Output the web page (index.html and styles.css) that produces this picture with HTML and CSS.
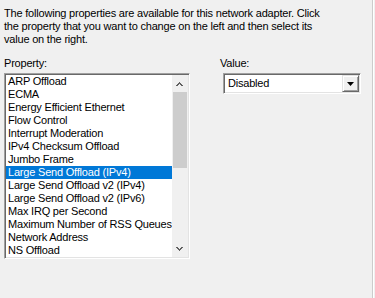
FILE: index.html
```html
<!DOCTYPE html>
<html lang="en">
<head>
    <meta charset="UTF-8" />
    <title>Advanced – Network Adapter Properties</title>
    <link rel="stylesheet" href="styles.css">
</head>
<body>
    <div class="tab-page">
        <p class="intro">The following properties are available for this network adapter. Click<br>the property that you want to change on the left and then select its<br>value on the right.</p>

        <div class="fields">
            <div class="col-property">
                <div class="field-label">Property:</div>
                <div class="listbox">
                    <ul class="list-items">
                        <li>ARP Offload</li>
                        <li>ECMA</li>
                        <li>Energy Efficient Ethernet</li>
                        <li>Flow Control</li>
                        <li>Interrupt Moderation</li>
                        <li>IPv4 Checksum Offload</li>
                        <li>Jumbo Frame</li>
                        <li class="selected">Large Send Offload (IPv4)</li>
                        <li>Large Send Offload v2 (IPv4)</li>
                        <li>Large Send Offload v2 (IPv6)</li>
                        <li>Max IRQ per Second</li>
                        <li>Maximum Number of RSS Queues</li>
                        <li>Network Address</li>
                        <li>NS Offload</li>
                    </ul>
                    <div class="scrollbar">
                        <div class="scroll-btn">
                            <svg width="7" height="4" viewBox="0 0 7 4"><path d="M3 0h1v1h1v1h1v1h1v1H5V3H4V2H3v1H2v1H0V3h1V2h1V1h1z" fill="#606060"/></svg>
                        </div>
                        <div class="scroll-track">
                            <div class="scroll-thumb"></div>
                        </div>
                        <div class="scroll-btn">
                            <svg width="7" height="4" viewBox="0 0 7 4"><path d="M0 0h2v1h1v1h1V1h1V0h2v1H6v1H5v1H4v1H3V3H2V2H1V1H0z" fill="#606060"/></svg>
                        </div>
                    </div>
                </div>
            </div>

            <div class="col-value">
                <div class="field-label">Value:</div>
                <div class="combobox">
                    <span class="combo-text">Disabled</span>
                    <span class="combo-btn">
                        <svg width="7" height="4" viewBox="0 0 7 4"><path d="M0 0h7L3.5 4z" fill="#000"/></svg>
                    </span>
                </div>
            </div>
        </div>
    </div>
</body>
</html>
```

FILE: styles.css
```css
body {
    margin: 0;
    padding: 0;
    background: #f0f0f0;
    font-family: 'Liberation Sans', Arial, sans-serif;
    font-size: 11px;
    line-height: 13px;
    letter-spacing: -0.2px; /* Dialog-Schrift ist etwas schmaler */
    color: #000;
    overflow: hidden;
}

/* Rahmen der Registerkarte rechts */
.tab-page {
    width: 373px;
    height: 298px;
    box-sizing: border-box;
    border-right: 1px solid #cccccc;
    box-shadow: 1px 0 0 #ffffff;
    padding: 7px 0 0 4px;
}

.intro {
    margin: 0;
}

.fields {
    display: flex;
    margin-top: 11px;
}

.col-property {
    width: 186px;
}

.col-value {
    margin-left: 30px;
    width: 141px;
}

.field-label {
    margin-bottom: 3px;
}

/* --- Listbox --- */

.listbox {
    display: flex;
    width: 186px;
    height: 186px;
    box-sizing: border-box;
    background: #fff;
    border: 1px solid;
    border-color: #a0a0a0 #ffffff #ffffff #a0a0a0;
    box-shadow: inset 1px 1px 0 #696969, inset -1px -1px 0 #e3e3e3;
    padding: 1px;
}

.list-items {
    list-style: none;
    margin: 0;
    padding: 0;
    flex: 1;
}

.list-items li {
    height: 13px;
    padding-left: 2px;
    white-space: nowrap;
}

.list-items li.selected {
    background: #0078d7;
    color: #fff;
}

.scrollbar {
    width: 17px;
    display: flex;
    flex-direction: column;
    background: #f0f0f0;
}

.scroll-btn {
    height: 17px;
    display: flex;
    align-items: center;
    justify-content: center;
}

.scroll-btn svg {
    display: block;
}

.scroll-track {
    flex: 1;
    padding: 0 1px;
}

.scroll-thumb {
    height: 76px;
    background: #cdcdcd;
}

/* --- Combobox --- */

.combobox {
    display: flex;
    margin-left: 3px;
    width: 138px;
    height: 21px;
    box-sizing: border-box;
    background: #fff;
    border: 1px solid;
    border-color: #a0a0a0 #ffffff #ffffff #a0a0a0;
    box-shadow: inset 1px 1px 0 #696969, inset -1px -1px 0 #e3e3e3;
    padding: 1px;
}

.combo-text {
    flex: 1;
    padding-left: 3px;
    line-height: 17px;
}

.combo-btn {
    width: 17px;
    height: 17px;
    box-sizing: border-box;
    background: #f0f0f0;
    border: 1px solid;
    border-color: #e3e3e3 #696969 #696969 #e3e3e3;
    box-shadow: inset 1px 1px 0 #ffffff, inset -1px -1px 0 #a0a0a0;
    display: flex;
    align-items: center;
    justify-content: center;
}

.combo-btn svg {
    display: block;
}
```
